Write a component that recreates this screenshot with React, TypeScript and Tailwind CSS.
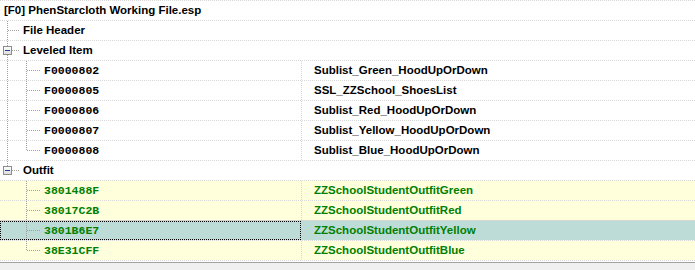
import React from "react";

type RowKind =
  | "root"
  | "file"
  | "leveled"
  | "outfit"
  | "lvChild"
  | "lvChildLast"
  | "ofChild"
  | "ofChildLast";

interface RowData {
  kind: RowKind;
  text: string;
  col2?: string;
  bg?: string;
  green?: boolean;
  focused?: boolean;
}

const LINE = "#a0a0a0";

function VLine({ x, y1, y2 }: { x: number; y1: number; y2: number }) {
  return (
    <line x1={x} y1={y1} x2={x} y2={y2} stroke={LINE} strokeWidth={1} strokeDasharray="1 1" shapeRendering="crispEdges" />
  );
}
function HLine({ y, x1, x2 }: { y: number; x1: number; x2: number }) {
  return (
    <line x1={x1} y1={y} x2={x2} y2={y} stroke={LINE} strokeWidth={1} strokeDasharray="1 1" shapeRendering="crispEdges" />
  );
}

function Expander() {
  return (
    <g>
      <defs>
        <linearGradient id="expg" x1="0" y1="0" x2="0" y2="1">
          <stop offset="0" stopColor="#ffffff" />
          <stop offset="1" stopColor="#dcdcdc" />
        </linearGradient>
      </defs>
      <rect x={3.5} y={5.5} width={8} height={8} fill="url(#expg)" stroke="#8c8c8c" strokeWidth={1} shapeRendering="crispEdges" />
      <line x1={5} y1={9.5} x2={10} y2={9.5} stroke="#1c3f94" strokeWidth={1} shapeRendering="crispEdges" />
    </g>
  );
}

function TreeLines({ kind }: { kind: RowKind }) {
  if (kind === "root") return null;
  if (kind === "file" || kind === "leveled" || kind === "outfit") {
    return (
      <svg width={20} height={19} className="shrink-0 block">
        {kind === "outfit" ? <VLine x={7.5} y1={0} y2={5} /> : <VLine x={7.5} y1={0} y2={19} />}
        {kind === "file" ? <HLine y={9.5} x1={8} x2={20} /> : <HLine y={9.5} x1={12} x2={20} />}
        {kind !== "file" && <Expander />}
      </svg>
    );
  }
  const underLeveled = kind === "lvChild" || kind === "lvChildLast";
  const last = kind === "lvChildLast" || kind === "ofChildLast";
  return (
    <svg width={40} height={19} className="shrink-0 block">
      {underLeveled && <VLine x={7.5} y1={0} y2={19} />}
      <VLine x={26.5} y1={0} y2={last ? 10 : 19} />
      <HLine y={9.5} x1={27} x2={40} />
    </svg>
  );
}

const rows: RowData[] = [
  { kind: "root", text: "[F0] PhenStarcloth Working File.esp" },
  { kind: "file", text: "File Header" },
  { kind: "leveled", text: "Leveled Item" },
  { kind: "lvChild", text: "F0000802", col2: "Sublist_Green_HoodUpOrDown" },
  { kind: "lvChild", text: "F0000805", col2: "SSL_ZZSchool_ShoesList" },
  { kind: "lvChild", text: "F0000806", col2: "Sublist_Red_HoodUpOrDown" },
  { kind: "lvChild", text: "F0000807", col2: "Sublist_Yellow_HoodUpOrDown" },
  { kind: "lvChildLast", text: "F0000808", col2: "Sublist_Blue_HoodUpOrDown" },
  { kind: "outfit", text: "Outfit" },
  { kind: "ofChild", text: "3801488F", col2: "ZZSchoolStudentOutfitGreen", bg: "yellow", green: true },
  { kind: "ofChild", text: "38017C2B", col2: "ZZSchoolStudentOutfitRed", bg: "yellow", green: true },
  { kind: "ofChild", text: "3801B6E7", col2: "ZZSchoolStudentOutfitYellow", bg: "teal", green: true, focused: true },
  { kind: "ofChildLast", text: "38E31CFF", col2: "ZZSchoolStudentOutfitBlue", bg: "yellow", green: true },
];

const sans = { fontFamily: '"Liberation Sans", Arial, sans-serif' };
const mono = { fontFamily: '"Liberation Mono", "Courier New", monospace' };

function Row({ r }: { r: RowData }) {
  const isChild = r.col2 !== undefined;
  const bg =
    r.bg === "yellow" ? "bg-[#ffffdc]" : r.bg === "teal" ? "bg-[#bedcd7]" : "bg-white";
  const color = r.green ? "text-[#008000]" : "text-black";
  const level1 = r.kind === "file" || r.kind === "leveled" || r.kind === "outfit";
  return (
    <div className={`relative flex h-[20px] border-t border-dotted border-[#d8d8d8] ${bg}`}>
      <div className="flex w-[301px] shrink-0 items-center">
        <TreeLines kind={r.kind} />
        <span
          className={`whitespace-nowrap font-bold ${color} ${
            isChild ? "ml-[4px] text-[11.5px]" : level1 ? "ml-[3px] text-[11.5px]" : "ml-[4px] text-[11.5px]"
          }`}
          style={isChild ? mono : sans}
        >
          {r.text}
        </span>
      </div>
      {isChild && (
        <div className="flex flex-1 items-center border-l border-dotted border-[#d8d8d8] pl-[12px]">
          <span className={`whitespace-nowrap text-[11.5px] font-bold ${color}`} style={sans}>
            {r.col2}
          </span>
        </div>
      )}
      {r.focused && (
        <div className="pointer-events-none absolute left-0 top-0 h-[19px] w-[301px] border border-dotted border-black" />
      )}
    </div>
  );
}

export default function App() {
  return (
    <div className="flex h-[270px] w-[695px] flex-col overflow-hidden bg-[#f0f0f0]">
      <div className="border-b border-[#a0a0a0] bg-white pb-[1px]">
        {rows.map((r, i) => (
          <Row key={i} r={r} />
        ))}
        <div className="border-t border-dotted border-[#d8d8d8]" />
      </div>
    </div>
  );
}
